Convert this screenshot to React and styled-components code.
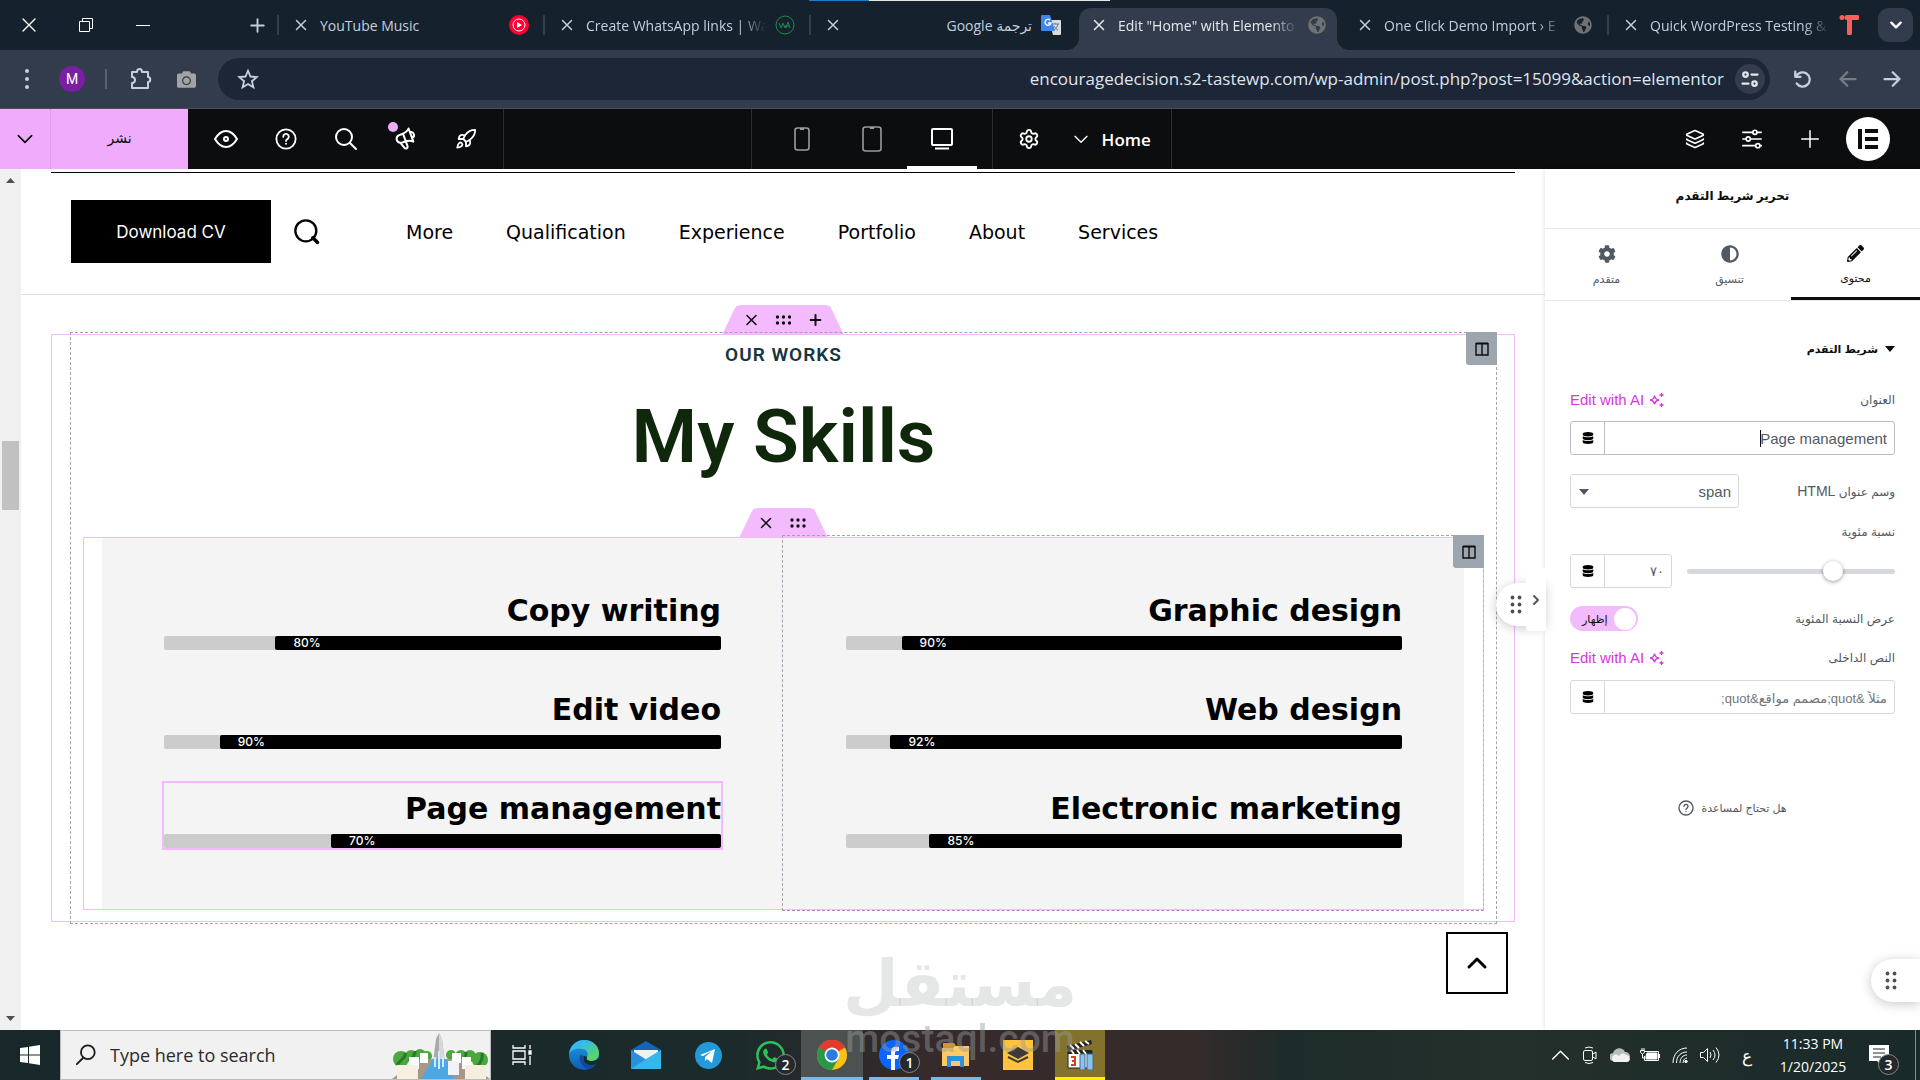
import React from "react";
import styled, { createGlobalStyle, css } from "styled-components";
import { Rocket, Settings, Layers } from "lucide-react";
import {
  FaAdjust,
  FaCamera,
  FaCog,
  FaDatabase,
  FaGlobeAmericas,
  FaPencilAlt,
  FaWhatsapp
} from "react-icons/fa";
import { HiOutlineSpeakerphone } from "react-icons/hi";

const ui = `"Open Sans", "Noto Sans", "DejaVu Sans", sans-serif`;
const panelFont = `"Liberation Sans", "DejaVu Sans", sans-serif`;
const siteFont = `"DejaVu Sans", sans-serif`;

const GlobalStyle = createGlobalStyle`
  *, *::before, *::after {
    box-sizing: border-box;
  }
  body {
    margin: 0;
    background: #fff;
    font-family: ${ui};
  }
  button {
    padding: 0;
    border: 0;
    background: none;
    color: inherit;
    font: inherit;
    cursor: pointer;
  }
  svg {
    display: block;
    flex: none;
  }
`;

const Page = styled.div`
  position: relative;
  display: flex;
  flex-direction: column;
  min-height: 100vh;
  overflow: hidden;
`;

const Stroke = ({ size = 24, width = 2, children, ...rest }) => (
  <svg
    width={size}
    height={size}
    viewBox="0 0 24 24"
    fill="none"
    stroke="currentColor"
    strokeWidth={width}
    strokeLinecap="round"
    strokeLinejoin="round"
    aria-hidden="true"
    {...rest}
  >
    {children}
  </svg>
);

/* ---------- browser tabs ---------- */

const TabStrip = styled.header`
  position: relative;
  display: flex;
  height: 50px;
  background: #16212e;
  color: #c3cfdf;
`;

const LoadLine = styled.div`
  position: absolute;
  top: 0;
  left: 809px;
  width: 301px;
  height: 1px;
  background: linear-gradient(to right, #1a7fcb 60px, #e6e6e6 60px);
`;

const WindowButtons = styled.div`
  display: flex;
  flex: 1;
  color: #fff;
`;

const WindowButton = styled.button`
  display: grid;
  place-items: center;
  width: 57px;
`;

const NewTab = styled.button`
  display: grid;
  place-items: center;
  width: 40px;
  margin-left: auto;
  color: #c3cfdf;
`;

const Tab = styled.div`
  position: relative;
  display: flex;
  align-items: center;
  flex: 0 1 266px;
  min-width: 0;
  padding: 0 13px 0 18px;
  font-size: 14px;
  line-height: 20px;

  &::before {
    content: "";
    position: absolute;
    left: 0;
    width: 2px;
    height: 20px;
    background: ${props => (props.$plain ? "transparent" : "#343f4e")};
  }

  ${props =>
    props.$active &&
    css`
      color: #e6e9ee;
      z-index: 1;

      &::before {
        left: 4px;
        top: 8px;
        width: 258px;
        height: 42px;
        border-radius: 12px 12px 0 0;
        background: #323c4c;
      }
      &::after {
        content: "";
        position: absolute;
        left: -8px;
        bottom: 0;
        width: 282px;
        height: 12px;
        background: radial-gradient(circle at 0 0, transparent 12px, #323c4c 12px) left / 12px 12px no-repeat,
          radial-gradient(circle at 12px 0, transparent 12px, #323c4c 12px) right / 12px 12px no-repeat;
      }
    `}
`;

const TabClose = styled.button`
  position: relative;
  z-index: 1;
  margin-right: 13px;
`;

const TabTitle = styled.span`
  position: relative;
  z-index: 1;
  flex: 1;
  min-width: 0;
  padding-top: 2px;
  overflow: hidden;
  white-space: nowrap;
  text-align: ${props => (props.$end ? "right" : "left")};
  ${props => props.$fade && "mask-image: linear-gradient(to right, #000 85%, transparent);"}
`;

const TabIcon = styled.span`
  position: relative;
  z-index: 1;
  display: grid;
  place-items: center;
  width: 22px;
  margin-left: 8px;
  color: #6f7174;
`;

const TabSearch = styled.button`
  display: grid;
  place-items: center;
  width: 35px;
  height: 34px;
  margin: 8px 7px 8px 5px;
  border-radius: 11px;
  background: #323c4c;
  color: #fff;
`;

const X = ({ size = 12, width = 3 }) => (
  <Stroke size={size} width={width}>
    <path d="M3 3 21 21M21 3 3 21" />
  </Stroke>
);

const YouTubeIcon = () => (
  <svg width="20" height="20" viewBox="0 0 20 20">
    <circle cx="10" cy="10" r="10" fill="#ff0033" />
    <circle cx="10" cy="10" r="6" fill="none" stroke="#fff" strokeWidth="1" />
    <path d="m8 7 5 3-5 3z" fill="#fff" />
  </svg>
);

const WaIcon = () => (
  <svg width="20" height="20" viewBox="0 0 20 20">
    <circle cx="10" cy="10" r="9" fill="none" stroke="#1e8a4c" strokeWidth="1" />
    <path d="m4 8 2 5 2-5 2 5 1-3m0 3 2-6 2 6M12 11h3" fill="none" stroke="#1e8a4c" />
  </svg>
);

const TranslateIcon = () => (
  <svg width="20" height="20" viewBox="0 0 20 20">
    <path d="M8 5h11a1 1 0 0 1 1 1v13a1 1 0 0 1-1 1h-7z" fill="#dcdcdc" />
    <path d="M11 9h7M14 8v1M17 9c-1 4-3 5-5 7m1-5c1 2 3 4 4 4" stroke="#68768a" fill="none" />
    <path d="M1 0h8l5 16H1a1 1 0 0 1-1-1V1a1 1 0 0 1 1-1z" fill="#3f86ee" />
    <path d="M9 5a3 3 0 1 0 1 3H7" stroke="#fff" strokeWidth="1.4" fill="none" />
  </svg>
);

const TasteIcon = () => (
  <svg width="20" height="20" viewBox="0 0 20 20">
    <circle cx="3" cy="2.500" r="2.500" fill="#ff5f5a" />
    <path d="M8 0h10a2 2 0 0 1 0 5h-5v13a2 2 0 0 1-5 0V5a2 2 0 0 1 0-5z" fill="#ff5f5a" />
  </svg>
);

/* ---------- address bar ---------- */

const AddressRow = styled.div`
  display: flex;
  align-items: center;
  height: 59px;
  padding-right: 7px;
  background: #323c4c;
  border-bottom: 1px solid #4a4d50;
  color: #c3cfe3;
`;

const BarButton = styled.button`
  display: grid;
  place-items: center;
  width: ${props => props.$w || 46}px;
  height: 40px;
  color: ${props => props.$color || "inherit"};
`;

const Avatar = styled.button`
  width: 26px;
  height: 26px;
  margin-left: 5px;
  border-radius: 50%;
  background: #7b1fa2;
  color: #fff;
  font: 14px/26px Roboto, sans-serif;
`;

const BarDivider = styled.span`
  width: 2px;
  height: 20px;
  margin: 0 12px 0 20px;
  background: #596272;
`;

const AddressBox = styled.div`
  display: flex;
  align-items: center;
  flex: 1;
  height: 42px;
  margin: 0 9px;
  padding: 0 5px 0 19px;
  border-radius: 21px;
  background: #1d2636;
`;

const AddressInput = styled.input`
  flex: 1;
  min-width: 0;
  padding: 0;
  border: 0;
  outline: 0;
  background: none;
  color: #dfe5ef;
  font: 17px/24px ${ui};
  text-align: right;
`;

const SiteInfo = styled.button`
  display: grid;
  place-items: center;
  width: 30px;
  height: 30px;
  margin-left: 11px;
  border-radius: 50%;
  background: #323c4c;
  color: #e3e6ea;
`;

/* ---------- editor bar ---------- */

const EditorBar = styled.div`
  display: flex;
  height: 60px;
  background: #0c0d0e;
  color: #fff;
`;

const PublishMore = styled.button`
  display: grid;
  place-items: center;
  width: 51px;
  background: #f0abfc;
  border-right: 1px dotted #cf8fdc;
  color: #0c0d0e;
`;

const Publish = styled.button`
  width: 137px;
  padding-bottom: 3px;
  background: #f0abfc;
  color: #0c0d0e;
  font-size: 14px;
`;

const BarGroup = styled.div`
  display: flex;
  align-items: center;
  flex: ${props => props.$flex || "none"};
  padding: ${props => props.$pad || "0"};
  border-right: 1px solid ${props => (props.$last ? "transparent" : "#2b2d2f")};
`;

const EditorButton = styled.button`
  position: relative;
  display: grid;
  place-items: center;
  width: ${props => props.$w || 60}px;
  height: 60px;
`;

const NewsDot = styled.span`
  position: absolute;
  top: 13px;
  left: 12px;
  width: 10px;
  height: 10px;
  border-radius: 50%;
  background: #f0abfc;
`;

const NewsIcon = styled(HiOutlineSpeakerphone)`
  transform: rotate(-20deg);
`;

const Device = styled.button`
  display: grid;
  place-items: center;
  width: 70px;
  height: 60px;
  color: ${props => (props.$active ? "#fff" : "#9a9c9e")};
  border-top: 3px solid transparent;
  border-bottom: 3px solid ${props => (props.$active ? "#fff" : "transparent")};
`;

const PageName = styled.button`
  display: flex;
  align-items: center;
  gap: 13px;
  margin-left: 14px;
  font-size: 17px;
  font-weight: 600;
`;

const ElementorLogo = styled.button`
  display: grid;
  place-items: center;
  width: 44px;
  height: 44px;
  margin-left: 6px;
  border-radius: 50%;
  background: #fff;
`;

/* ---------- preview ---------- */

const Workspace = styled.div`
  display: flex;
  flex: 1;
`;

const Scrollbar = styled.div`
  display: flex;
  flex-direction: column;
  align-items: center;
  justify-content: space-between;
  width: 21px;
  padding: 9px 0;
  background: #f0f0f0;
  color: #505050;
`;

const Thumb = styled.div`
  width: 17px;
  height: 69px;
  margin-bottom: 249px;
  background: #c1c1c1;
`;

const Arrow = ({ down, size = 9 }) => (
  <svg width={size} height={size - 4} viewBox="0 0 10 5" preserveAspectRatio="none">
    <path d={down ? "M0 0h10L5 5z" : "M0 5h10L5 0z"} fill="currentColor" />
  </svg>
);

const Canvas = styled.main`
  position: relative;
  flex: 1;
  min-width: 0;
`;

const TopRule = styled.div`
  height: 1px;
  margin: 3px 30px 0;
  background: #000;
`;

const SiteHeader = styled.div`
  display: flex;
  align-items: center;
  padding: 27px 50px 31px;
  border-bottom: 1px solid #e2e2e2;
`;

const DownloadButton = styled.button`
  width: 200px;
  height: 63px;
  background: #000;
  color: #fff;
  font: 17px Inter, sans-serif;
`;

const SiteSearch = styled.button`
  margin: 0 85px 0 22px;
`;

const SiteNav = styled.nav`
  display: flex;
  gap: 53px;
`;

const SiteLink = styled.a`
  color: #000;
  font: 19px/24px ${siteFont};
  text-decoration: none;
`;

const dashed = "1px dashed #9da5ae";

const Section = styled.section`
  position: relative;
  margin: 39px 30px 0;
  border: 1px solid #f3bafd;
`;

const SectionColumn = styled.div`
  position: relative;
  margin: -3px 17px -3px 18px;
  padding: 12px 12px 13px 12px;
  border: ${dashed};
`;

const Eyebrow = styled.p`
  margin: 0;
  color: #17343f;
  font: 600 19px/20px Roboto, sans-serif;
  letter-spacing: 1px;
  text-align: center;
`;

const Heading = styled.h2`
  margin: 21px 0 51px;
  color: #0f270b;
  font: 600 75px/100px Roboto, sans-serif;
  text-align: center;
`;

const Handle = styled.div`
  position: absolute;
  bottom: 100%;
  left: 50%;
  display: flex;
  align-items: center;
  justify-content: center;
  gap: 17px;
  width: ${props => props.$w}px;
  height: 29px;
  margin-bottom: 1px;
  background: #f3bafd;
  color: #0c0d0e;
  transform: translateX(-50%);
  clip-path: polygon(0 100%, 12px 4px, 14px 1px, 18px 0, calc(100% - 18px) 0, calc(100% - 14px) 1px, calc(100% - 12px) 4px, 100% 100%);
`;

const ColumnButton = styled.button`
  position: absolute;
  top: -1px;
  right: -1px;
  display: grid;
  place-items: center;
  width: 31px;
  height: 33px;
  border-radius: 0 0 0 3px;
  background: #9da5ae;
  color: #0c0d0e;
`;

const InnerSection = styled.div`
  position: relative;
  display: grid;
  grid-template-columns: 1fr 1fr;
  padding: 0 19px 0 18px;
  border: 1px solid #f3bafd;
  background: #f4f4f4 content-box;
`;

const SkillColumn = styled.div`
  display: flex;
  flex-direction: column;
  gap: 34px;
  padding: 47px 62px 61px;

  ${props =>
    props.$outlined &&
    css`
      position: relative;
      margin: -3px -20px -2px -1px;
      padding: 49px 81px 61px 63px;
      border: ${dashed};
      border-right-color: #d99be6;
      border-bottom-color: #a58bb0;
    `}
`;

const Skill = styled.div`
  outline: ${props => (props.$selected ? "2px solid #f3bafd" : "none")};
`;

const SkillName = styled.span`
  display: block;
  height: 51px;
  color: #000;
  font: bold 30px/52px ${siteFont};
  text-align: right;
`;

const Track = styled.div`
  display: flex;
  justify-content: flex-end;
  height: 14px;
  border-radius: 2px;
  background: #ccc;
`;

const Fill = styled.div`
  padding-left: 18px;
  border-radius: 2px;
  background: #000;
  color: #fff;
  font: 500 12px/14px Inter, sans-serif;
`;

const ToTop = styled.button`
  display: grid;
  place-items: center;
  width: 62px;
  height: 62px;
  margin: 10px 37px 0 auto;
  border: 2px solid #000;
`;

const Watermark = styled.div`
  position: absolute;
  left: 50%;
  bottom: 21px;
  width: 240px;
  color: rgba(150, 158, 158, 0.25);
  text-align: center;
  transform: translateX(-50%);
  pointer-events: none;
`;

const MarkArabic = styled.div`
  font: bold 64px/70px "DejaVu Sans", sans-serif;
  white-space: nowrap;
`;

const MarkLatin = styled.div`
  color: rgba(150, 155, 155, 0.45);
  font: 500 39px/40px Roboto, sans-serif;
`;

/* ---------- side panel ---------- */

const Panel = styled.aside`
  position: relative;
  width: 375px;
  background: #fff;
  box-shadow: 0 0 4px rgba(0, 0, 0, 0.15);
  color: #515962;
  font: 12px/20px ${panelFont};
`;

const PanelTitle = styled.h1`
  height: 60px;
  margin: 0;
  border-bottom: 1px solid #e6e8ea;
  color: #0c0d0e;
  font: bold 12px/54px ${panelFont};
  text-align: center;
`;

const PanelTabs = styled.div`
  display: grid;
  grid-template-columns: 123fr 123fr 129fr;
  height: 72px;
  border-bottom: 1px solid #e6e8ea;
`;

const PanelTab = styled.button`
  display: flex;
  flex-direction: column;
  align-items: center;
  gap: 6px;
  padding-top: 16px;
  border-bottom: 3px solid ${props => (props.$active ? "#0c0d0e" : "transparent")};
  color: ${props => (props.$active ? "#0c0d0e" : "#515962")};
  font-size: 11px;
`;

const Controls = styled.div`
  display: flex;
  flex-direction: column;
  padding: 36px 25px 0;
`;

const GroupTitle = styled.button`
  display: flex;
  align-items: center;
  gap: 7px;
  height: 24px;
  margin-bottom: 29px;
  color: #0c0d0e;
  font: bold 11px/24px ${panelFont};
`;

const LabelRow = styled.div`
  display: flex;
  align-items: center;
  justify-content: space-between;
  height: 20px;
  margin-bottom: ${props => props.$mb || 12}px;
`;

const ControlRow = styled.div`
  display: flex;
  align-items: center;
  justify-content: space-between;
  margin-top: ${props => props.$mt || 0}px;
  margin-bottom: ${props => props.$mb || 18}px;
`;

const TagName = styled.span`
  font-size: 14px;
`;

const AiButton = styled.button`
  display: flex;
  align-items: center;
  gap: 5px;
  color: #d936dd;
  font: 15px/20px ${panelFont};
`;

const TagButton = styled.button`
  display: grid;
  place-items: center;
  width: 35px;
  height: 34px;
  margin-right: -1px;
  border: 1px solid ${props => (props.$focus ? "#babfc5" : "#d5d8dc")};
  border-radius: 3px 0 0 3px;
  color: #000;
`;

const Field = styled.div`
  position: relative;
  display: flex;
`;

const TextInput = styled.input`
  flex: 1;
  width: ${props => props.$w || "auto"};
  min-width: 0;
  height: 34px;
  padding: 0 7px;
  border: 1px solid ${props => (props.$focus ? "#babfc5" : "#d5d8dc")};
  border-radius: 0 3px 3px 0;
  outline: 0;
  color: #515962;
  font: ${props => (props.$w ? 13 : 15)}px ${panelFont};

  &::placeholder {
    color: #70767d;
    font-size: 13px;
    opacity: 1;
  }
`;

const Caret = styled.span`
  position: absolute;
  top: 9px;
  right: 134px;
  width: 1px;
  height: 17px;
  background: #0c0d0e;
`;

const SelectWrap = styled.div`
  position: relative;
  width: 169px;
  color: #515962;

  svg {
    position: absolute;
    top: 15px;
    left: 9px;
  }
`;

const Select = styled.select`
  display: block;
  width: 100%;
  height: 34px;
  padding: 0 7px;
  border: 1px solid #d5d8dc;
  border-radius: 3px;
  appearance: none;
  background: none;
  color: inherit;
  direction: rtl;
  font: 15px ${panelFont};
`;

const SliderWrap = styled.div`
  position: relative;
  width: 208px;

  &::before {
    content: "";
    position: absolute;
    top: 8px;
    width: 100%;
    height: 5px;
    border-radius: 3px;
    background: #d5d8dc;
  }
`;

const Range = styled.input`
  position: relative;
  display: block;
  width: calc(100% + 20px);
  height: 20px;
  margin: 0 -10px;
  appearance: none;
  background: none;

  &::-webkit-slider-thumb {
    width: 20px;
    height: 20px;
    appearance: none;
    border-radius: 50%;
    background: #fff;
    box-shadow: 0 1px 4px rgba(0, 0, 0, 0.4);
  }
`;

const Switch = styled.label`
  position: relative;
  display: flex;
  align-items: center;
  width: 68px;
  height: 25px;
  padding: 0 2px 0 12px;
  border-radius: 13px;
  background: #f3bafd;
  color: #0c0d0e;
  font-size: 11px;

  input {
    position: absolute;
    inset: 0;
    width: 100%;
    height: 100%;
    margin: 0;
    opacity: 0;
  }
  i {
    width: 22px;
    height: 22px;
    margin-left: auto;
    border-radius: 50%;
    background: #fff;
  }
`;

const Help = styled.a`
  display: flex;
  align-items: center;
  justify-content: center;
  gap: 7px;
  margin-top: 84px;
  color: #515962;
  font-size: 11px;
  text-decoration: none;
`;

const Pill = styled.button`
  position: absolute;
  top: ${props => props.$top}px;
  ${props => (props.$right ? "right: 0;" : "left: -49px;")}
  width: 49px;
  height: 43px;
  padding-left: 13px;
  border-radius: 22px 0 0 22px;
  background: #fff;
  box-shadow: 0 2px 12px rgba(0, 0, 0, 0.22);
  color: #515151;
`;

const Collapse = styled.button`
  position: absolute;
  top: 399px;
  left: -19px;
  display: grid;
  place-items: center;
  width: 20px;
  height: 63px;
  border-radius: 3px 0 0 3px;
  background: #fff;
  color: #515962;
`;

/* ---------- taskbar ---------- */

const Taskbar = styled.footer`
  position: relative;
  display: flex;
  align-items: center;
  height: 50px;
  background: linear-gradient(to right, #182729 0, #1b2a2b 38%, #362a2b 48%, #362b2b 62%, #1d2b2a 67%, #24302b 78%, #192a2a 100%);
  color: #fff;
`;

const StartButton = styled.button`
  display: grid;
  place-items: center;
  width: 60px;
  height: 50px;
`;

const SearchBox = styled.label`
  display: flex;
  align-items: center;
  gap: 13px;
  width: 431px;
  height: 50px;
  padding-left: 14px;
  border: 1px solid #bcbcbc;
  background: #f1f1f1;
  color: #1b1b1b;
`;

const SearchInput = styled.input`
  flex: 1;
  min-width: 0;
  padding: 0;
  border: 0;
  outline: 0;
  background: none;
  font: 18px ${ui};

  &::placeholder {
    color: #2b2b2b;
    opacity: 1;
  }
`;

const Task = styled.button`
  position: relative;
  display: grid;
  place-items: center;
  width: 62px;
  height: 50px;

  &::before {
    content: "";
    position: absolute;
    inset: 0 ${props => (props.$line && !props.$wide ? 6 : 0)}px;
    background: ${props => props.$tint || "transparent"};
    border-bottom: 3px solid ${props => props.$line || "transparent"};
  }
  svg {
    position: relative;
  }
`;

const Badge = styled.span`
  position: absolute;
  top: ${props => props.$top || 24}px;
  left: ${props => props.$left || 36}px;
  width: 21px;
  height: 21px;
  border: 1px solid #85888a;
  border-radius: 50%;
  background: #26292b;
  color: #fff;
  font: 600 14px/19px ${ui};
  text-align: center;
`;

const Tray = styled.div`
  display: flex;
  align-items: center;
  height: 50px;
  margin-left: auto;
  border-right: 1px solid #8a9090;
  margin-right: 4px;
`;

const TrayButton = styled.button`
  position: relative;
  display: grid;
  place-items: center;
  width: ${props => props.$w || 30}px;
  height: 50px;
  font-size: 17px;
`;

const Notifications = styled(TrayButton)`
  width: 58px;
  padding-right: 14px;
`;

const Clock = styled.time`
  width: 88px;
  font: 14px/23px ${ui};
  text-align: center;
`;

const Dots = ({ cols, rows, size }) => (
  <svg width={cols * size} height={rows * size} viewBox={`0 0 ${cols * 4} ${rows * 4}`} fill="currentColor">
    {Array.from({ length: cols * rows }, (_, i) => (
      <circle key={i} cx={(i % cols) * 4 + 2} cy={Math.floor(i / cols) * 4 + 2} r="1.100" />
    ))}
  </svg>
);

const ColumnIcon = () => (
  <svg width="14" height="14" viewBox="0 0 14 14" fill="none" stroke="currentColor">
    <path d="M1 1.500h12" strokeWidth="2" />
    <path d="M1 1v12h12V1M7 1v12" strokeWidth="1.400" />
  </svg>
);

const Sparkles = () => (
  <svg width="16" height="14" viewBox="0 0 16 14" fill="none" stroke="currentColor" strokeWidth="1.300">
    <path d="M5.500 2.500Q6 6.500 10 7 6 7.500 5.500 11.500 5 7.500 1 7 5 6.500 5.500 2.500zM12.500 0v4M10.500 2h4M12.500 10v4M10.500 12h4" />
  </svg>
);

const Question = ({ size, width }) => (
  <Stroke size={size} width={width}>
    <circle cx="12" cy="12" r="10.500" />
    <path d="M9 9.500a3 3 0 1 1 4.500 2.600c-1 .6-1.500 1-1.500 2M12 17v.3" />
  </Stroke>
);

const Fountain = () => (
  <svg width="98" height="48" viewBox="0 0 98 48">
    <g fill="#4aa83c">
      <circle cx="9" cy="28" r="8" />
      <circle cx="19" cy="25" r="6" />
      <circle cx="28" cy="24" r="6" />
      <circle cx="35" cy="25" r="5" />
      <circle cx="59" cy="24" r="5" />
      <circle cx="69" cy="25" r="6" />
      <circle cx="78" cy="25" r="6" />
      <circle cx="88" cy="29" r="8" />
    </g>
    <path d="M5 34c3-5 7-5 9-12M17 30c4-3 6-6 6-10M84 36c4-3 7-8 6-14M70 31c3-3 4-6 4-10" stroke="#257a2c" strokeWidth="3" fill="none" />
    <path d="m0 48 26-20h44l28 20z" fill="#a69786" />
    <path d="M44 8l3-6 3 6 3 24H41z" fill="#a9a9a9" />
    <path d="M47 2l3 6 3 24h-6z" fill="#d6d6d6" />
    <path d="m41 28-12 20h34L54 28z" fill="#4ba8e6" />
    <path d="M47 20v18M43 26v10M51 26v10" stroke="#cfeaf8" strokeWidth="2" />
    <g fill="#fff">
      <path d="M17 26h10v12H17zM28 22h8v10h-8zM60 22h9v10h-9zM70 26h9v12h-9z" />
      <path d="M56 30h11v14H56z" fill="#f2f2f7" />
      <path d="M5 34h21v14H5z" fill="#f7efe0" />
      <path d="M73 34h21v14H73z" fill="#f5edde" />
    </g>
  </svg>
);

const EdgeIcon = () => (
  <svg width="30" height="30" viewBox="0 0 30 30">
    <defs>
      <linearGradient id="edgeTop" x1="0" y1="0" x2="1" y2="1">
        <stop offset="0.300" stopColor="#35b9ee" />
        <stop offset="0.800" stopColor="#56d66a" />
      </linearGradient>
      <linearGradient id="edgeSide" x1="0" y1="0" x2="0" y2="1">
        <stop offset="0" stopColor="#1b9de2" />
        <stop offset="1" stopColor="#1459b3" />
      </linearGradient>
    </defs>
    <circle cx="15" cy="15" r="15" fill="url(#edgeSide)" />
    <path d="M0 14C1 5 8 0 15 0c9 0 15 6 15 13 0 5-3 8-7 8-5 0-6-2-5-4 2-3 0-8-5-8C7 8 2 10 0 14z" fill="url(#edgeTop)" />
    <path d="M18 17c-1 2 0 4 5 4 3 0 5-1 6-3l1 3c-1 2-2 3-4 4-7 3-14-2-11-9 1 0 2 0 3 1z" fill="#1b2a2b" />
    <path d="M11 15c-2 7 3 13 9 14 3-1 5-3 7-5-7 3-14-1-12-8z" fill="#0f4a9d" />
  </svg>
);

const MailIcon = () => (
  <svg width="32" height="28" viewBox="0 0 32 28">
    <path d="M1 9 16 0l15 9v19H1z" fill="#1464b8" />
    <path d="M4 9h24v12H4z" fill="#f0f0f0" />
    <path d="M1 9v19h30z" fill="#2b8fe0" />
    <path d="M31 9v19H1l15-10z" fill="#34b8ea" />
  </svg>
);

const TelegramIcon = () => (
  <svg width="27" height="27" viewBox="0 0 27 27">
    <circle cx="13.500" cy="13.500" r="13.500" fill="#2299d8" />
    <path d="m5 13 15-6-3 14-5-4-2 2v-4l7-6-9 5z" fill="#fff" />
  </svg>
);

const ChromeIcon = () => (
  <svg width="30" height="30" viewBox="0 0 30 30">
    <circle cx="15" cy="15" r="15" fill="#fbc116" />
    <path d="M15 15 2 7.500a15 15 0 0 1 26 0z" fill="#e33b2e" />
    <path d="M15 7.500h13A15 15 0 0 0 2 7.500L8.500 18.700z" fill="#e33b2e" />
    <path d="M2 7.500A15 15 0 0 0 15 30l6.500-11.200L15 15z" fill="#279847" />
    <circle cx="15" cy="15" r="7.500" fill="#fff" />
    <circle cx="15" cy="15" r="5.800" fill="#2c7be5" />
  </svg>
);

const FacebookIcon = () => (
  <svg width="30" height="30" viewBox="0 0 30 30">
    <circle cx="15" cy="15" r="15" fill="#0b66ff" />
    <path d="M12 30V19H8v-4h4v-3c0-5 3-6 8-5v4c-3 0-4 0-4 2v2h4l-1 4h-3v11z" fill="#fff" />
  </svg>
);

const ExplorerIcon = () => (
  <svg width="28" height="25" viewBox="0 0 28 25">
    <path d="M1 0h11l2 3h13v8H1z" fill="#d9931e" />
    <path d="M0 5h11l2-2h14v20H0z" fill="#fbca65" />
    <path d="M5 13h17v11h-4v-6H9v6H5z" fill="#2f90dc" />
  </svg>
);

const StackIcon = () => (
  <svg width="30" height="30" viewBox="0 0 30 30">
    <path d="M0 0h30v30H0z" fill="#ffc33c" />
    <path d="m15 7 11 6-11 6-11-6z" fill="#3a3a3e" />
    <path d="m5 17 10 5 10-5" stroke="#3a3a3e" strokeWidth="2" fill="none" />
  </svg>
);

const ClapperIcon = () => (
  <svg width="28" height="30" viewBox="0 0 28 30">
    <path d="m1 6 24-6 1 4L2 11z" fill="#222" />
    <path d="m4 5 4 4m1-5 4 4m1-6 4 4m1-5 4 3" stroke="#fff" strokeWidth="2" />
    <path d="M2 11h24v17H2z" fill="#fff" stroke="#222" />
    <path d="M2 10h24v4H2z" fill="#222" />
    <path d="M5 10l3 4m3-4 3 4m3-4 3 4" stroke="#fff" strokeWidth="2" />
    <path d="M5 17h4v4H6m3 0v4H5" stroke="#d6421f" strokeWidth="2" fill="none" />
    <path d="M22 16v5" stroke="#2a9b3c" strokeWidth="2" />
    <path d="M14 14h5v16h-5zM21 14h6v16h-6z" fill="#8fc0e8" stroke="#3d6d94" />
  </svg>
);

const tabs = [
  { title: "YouTube Music", icon: <YouTubeIcon /> },
  { title: "Create WhatsApp links | Wa", icon: <WaIcon />, fade: true },
  { title: "Google ترجمة", icon: <TranslateIcon />, end: true },
  { title: 'Edit "Home" with Elemento', icon: <FaGlobeAmericas size={18} />, fade: true, active: true },
  { title: "One Click Demo Import › E", icon: <FaGlobeAmericas size={18} />, fade: true, plain: true },
  { title: "Quick WordPress Testing &", icon: <TasteIcon />, fade: true }
];

const navLinks = ["More", "Qualification", "Experience", "Portfolio", "About", "Services"];

const leftSkills = [
  { name: "Copy writing", value: 80 },
  { name: "Edit video", value: 90 },
  { name: "Page management", value: 70, selected: true }
];

const rightSkills = [
  { name: "Graphic design", value: 90 },
  { name: "Web design", value: 92 },
  { name: "Electronic marketing", value: 85 }
];

const BrowserTabs = () => (
  <TabStrip>
    <LoadLine />
    <WindowButtons>
      <WindowButton aria-label="Close window">
        <X size={16} width={2} />
      </WindowButton>
      <WindowButton aria-label="Restore">
        <svg width="14" height="14" viewBox="0 0 14 14" fill="none" stroke="currentColor">
          <path d="M.500 3.500h10v10H.500zM3.500 3V.500h10v10H11" />
        </svg>
      </WindowButton>
      <WindowButton aria-label="Minimize">
        <svg width="14" height="1" viewBox="0 0 14 1">
          <path d="M0 0h14v1H0z" fill="currentColor" />
        </svg>
      </WindowButton>
      <NewTab aria-label="New tab">
        <Stroke size={15} width={3}>
          <path d="M12 2v20M2 12h20" />
        </Stroke>
      </NewTab>
    </WindowButtons>
    {tabs.map(tab => (
      <Tab key={tab.title} $active={tab.active} $plain={tab.plain}>
        <TabClose aria-label="Close tab">
          <X />
        </TabClose>
        <TabTitle $fade={tab.fade} $end={tab.end}>
          {tab.title}
        </TabTitle>
        <TabIcon>{tab.icon}</TabIcon>
      </Tab>
    ))}
    <TabSearch aria-label="Search tabs">
      <Stroke size={14} width={4}>
        <path d="m4 8 8 8 8-8" />
      </Stroke>
    </TabSearch>
  </TabStrip>
);

const AddressBar = () => (
  <AddressRow>
    <BarButton $w={54} aria-label="Menu">
      <svg width="4" height="20" viewBox="0 0 4 20" fill="currentColor">
        <circle cx="2" cy="2" r="2" />
        <circle cx="2" cy="10" r="2" />
        <circle cx="2" cy="18" r="2" />
      </svg>
    </BarButton>
    <Avatar>M</Avatar>
    <BarDivider />
    <BarButton $w={44} aria-label="Extensions">
      <svg width="22" height="22" viewBox="0 0 22 22" fill="none" stroke="currentColor" strokeWidth="2">
        <path d="M2 4h5c0-4 5-4 5 0h6v5c3 0 3 5 0 5v6H2v-5c4 0 4-6 0-6z" strokeLinejoin="round" />
      </svg>
    </BarButton>
    <BarButton $color="#a3a3a3" aria-label="Screenshot">
      <FaCamera size={19} />
    </BarButton>
    <AddressBox>
      <Stroke size={22} width={2} strokeLinejoin="miter">
        <path d="m12 3 2.700 6.300 6.800.600-5.200 4.500 1.600 6.700L12 17.500l-5.900 3.600 1.600-6.700L2.500 9.900l6.800-.600z" />
      </Stroke>
      <AddressInput
        aria-label="Address"
        defaultValue="encouragedecision.s2-tastewp.com/wp-admin/post.php?post=15099&action=elementor"
      />
      <SiteInfo aria-label="Site information">
        <Stroke size={18} width={3}>
          <circle cx="6" cy="6" r="3" />
          <path d="M14 6h8M2 18h8" />
          <circle cx="18" cy="18" r="3" />
        </Stroke>
      </SiteInfo>
    </AddressBox>
    <BarButton aria-label="Reload">
      <Stroke size={18} width={3}>
        <path d="M3 2v7h7M4 9a9.500 9.500 0 1 1 1 9" />
      </Stroke>
    </BarButton>
    <BarButton $color="#767c86" aria-label="Back">
      <Stroke size={18} width={3}>
        <path d="M22 12H3M11 3l-9 9 9 9" />
      </Stroke>
    </BarButton>
    <BarButton $w={42} aria-label="Forward">
      <Stroke size={18} width={3}>
        <path d="M2 12h19M13 3l9 9-9 9" />
      </Stroke>
    </BarButton>
  </AddressRow>
);

const EditorTop = () => (
  <EditorBar>
    <PublishMore aria-label="Save options">
      <Stroke size={20} width={2}>
        <path d="m4 8 8 8 8-8" />
      </Stroke>
    </PublishMore>
    <Publish>نشر</Publish>
    <BarGroup $pad="0 7px 0 8px">
      <EditorButton aria-label="Preview">
        <Stroke size={24} width={2}>
          <path d="M1 12c3-5 6-8 11-8s8 3 11 8c-3 5-6 8-11 8s-8-3-11-8z" />
          <circle cx="12" cy="12" r="2" />
        </Stroke>
      </EditorButton>
      <EditorButton aria-label="Help">
        <Question size={22} width={2} />
      </EditorButton>
      <EditorButton aria-label="Finder">
        <Stroke size={24} width={2}>
          <circle cx="10" cy="10" r="8" />
          <path d="m16 16 6 6" />
        </Stroke>
      </EditorButton>
      <EditorButton aria-label="What's new">
        <NewsIcon size={24} />
        <NewsDot />
      </EditorButton>
      <EditorButton aria-label="Checklist">
        <Rocket size={22} strokeWidth={2} />
      </EditorButton>
    </BarGroup>
    <BarGroup $flex="1" />
    <BarGroup $pad="0 15px">
      <Device aria-label="Mobile">
        <svg width="16" height="24" viewBox="0 0 16 24" fill="none" stroke="currentColor" strokeWidth="1.600">
          <rect x="1" y="1" width="14" height="22" rx="2.500" />
          <path d="M6 2h4" strokeWidth="2" />
        </svg>
      </Device>
      <Device aria-label="Tablet">
        <svg width="20" height="26" viewBox="0 0 20 26" fill="none" stroke="currentColor" strokeWidth="1.600">
          <rect x="1" y="1" width="18" height="24" rx="2.500" />
          <path d="M8 2h4" strokeWidth="2" />
        </svg>
      </Device>
      <Device $active aria-label="Desktop">
        <svg width="22" height="22" viewBox="0 0 22 22" fill="none" stroke="currentColor" strokeWidth="2">
          <rect x="1" y="1" width="20" height="16" rx="1" />
          <path d="M4 20.500h14" />
        </svg>
      </Device>
    </BarGroup>
    <BarGroup $pad="0 20px 0 6px">
      <EditorButton aria-label="Page settings">
        <Settings size={22} strokeWidth={2} />
      </EditorButton>
      <PageName>
        <Stroke size={16} width={2}>
          <path d="m3 8 9 9 9-9" />
        </Stroke>
        Home
      </PageName>
    </BarGroup>
    <BarGroup $flex="2" $last />
    <BarGroup $pad="0 29px 0 0" $last>
      <EditorButton $w={57} aria-label="Structure">
        <Layers size={20} strokeWidth={2} />
      </EditorButton>
      <EditorButton $w={57} aria-label="Site settings">
        <Stroke size={20} width={2}>
          <path d="M1 4h12M18 4h5M1 12h4M10 12h13M1 20h15M22 20h1" />
          <circle cx="15.500" cy="4" r="2.500" />
          <circle cx="7.500" cy="12" r="2.500" />
          <circle cx="19" cy="20" r="2.500" />
        </Stroke>
      </EditorButton>
      <EditorButton aria-label="Add element">
        <Stroke size={18} width={2}>
          <path d="M12 1v22M1 12h22" />
        </Stroke>
      </EditorButton>
      <ElementorLogo aria-label="Elementor">
        <svg width="20" height="20" viewBox="0 0 20 20" fill="#0c0d0e">
          <path d="M0 0h4v20H0zM7 0h13v4H7zM7 8h13v4H7zM7 16h13v4H7z" />
        </svg>
      </ElementorLogo>
    </BarGroup>
  </EditorBar>
);

const SkillBars = ({ items }) =>
  items.map(item => (
    <Skill key={item.name} $selected={item.selected}>
      <SkillName>{item.name}</SkillName>
      <Track role="progressbar" aria-label={item.name} aria-valuenow={item.value}>
        <Fill style={{ width: `${item.value}%` }}>{item.value}%</Fill>
      </Track>
    </Skill>
  ));

const Preview = () => (
  <Canvas>
    <TopRule />
    <SiteHeader>
      <DownloadButton>Download CV</DownloadButton>
      <SiteSearch aria-label="Search">
        <Stroke size={28} width={2}>
          <circle cx="11" cy="11" r="9" />
          <path d="m17 17 4 4" strokeWidth="3" />
        </Stroke>
      </SiteSearch>
      <SiteNav>
        {navLinks.map(link => (
          <SiteLink key={link} href="#">
            {link}
          </SiteLink>
        ))}
      </SiteNav>
    </SiteHeader>
    <Section>
      <Handle $w={121}>
        <X size={12} />
        <Dots cols={3} rows={2} size={6} />
        <Stroke size={12} width={4}>
          <path d="M12 2v20M2 12h20" />
        </Stroke>
      </Handle>
      <SectionColumn>
        <ColumnButton aria-label="Edit column">
          <ColumnIcon />
        </ColumnButton>
        <Eyebrow>OUR WORKS</Eyebrow>
        <Heading>My Skills</Heading>
        <InnerSection>
          <Handle $w={88}>
            <X size={12} />
            <Dots cols={3} rows={2} size={6} />
          </Handle>
          <SkillColumn>
            <SkillBars items={leftSkills} />
          </SkillColumn>
          <SkillColumn $outlined>
            <ColumnButton aria-label="Edit column">
              <ColumnIcon />
            </ColumnButton>
            <SkillBars items={rightSkills} />
          </SkillColumn>
        </InnerSection>
      </SectionColumn>
    </Section>
    <ToTop aria-label="Back to top">
      <Stroke size={24} width={3}>
        <path d="m4 16 8-8 8 8" />
      </Stroke>
    </ToTop>
  </Canvas>
);

const EditPanel = () => (
  <Panel>
    <Pill $top={414} aria-label="Move panel">
      <Dots cols={2} rows={3} size={7} />
    </Pill>
    <Collapse aria-label="Collapse panel">
      <Stroke size={12} width={4}>
        <path d="m8 4 8 8-8 8" />
      </Stroke>
    </Collapse>
    <PanelTitle dir="rtl">تحرير شريط التقدم</PanelTitle>
    <PanelTabs>
      <PanelTab>
        <FaCog size={18} />
        متقدم
      </PanelTab>
      <PanelTab>
        <FaAdjust size={18} />
        تنسيق
      </PanelTab>
      <PanelTab $active>
        <FaPencilAlt size={17} />
        محتوى
      </PanelTab>
    </PanelTabs>
    <Controls>
      <GroupTitle dir="rtl">
        <Arrow down size={10} />
        شريط التقدم
      </GroupTitle>
      <LabelRow $mb={11}>
        <AiButton>
          Edit with AI <Sparkles />
        </AiButton>
        <label htmlFor="title">العنوان</label>
      </LabelRow>
      <Field>
        <TagButton $focus aria-label="Dynamic tags">
          <FaDatabase size={12} />
        </TagButton>
        <TextInput $focus id="title" dir="rtl" defaultValue="Page management" />
        <Caret />
      </Field>
      <ControlRow $mt={19} $mb={14}>
        <SelectWrap>
          <Select id="tag">
            <option>span</option>
          </Select>
          <Arrow down size={10} />
        </SelectWrap>
        <label htmlFor="tag" dir="rtl">
          وسم عنوان <TagName>HTML</TagName>
        </label>
      </ControlRow>
      <LabelRow>
        <span />
        <label htmlFor="percent">نسبة مئوية</label>
      </LabelRow>
      <ControlRow>
        <Field>
          <TagButton aria-label="Dynamic tags">
            <FaDatabase size={12} />
          </TagButton>
          <TextInput id="percent" $w="68px" dir="rtl" defaultValue="٧٠" />
        </Field>
        <SliderWrap>
          <Range type="range" aria-label="نسبة مئوية" defaultValue="70" />
        </SliderWrap>
      </ControlRow>
      <ControlRow $mb={17}>
        <Switch>
          <input id="show" type="checkbox" defaultChecked />
          إظهار
          <i />
        </Switch>
        <label htmlFor="show">عرض النسبة المئوية</label>
      </ControlRow>
      <LabelRow>
        <AiButton>
          Edit with AI <Sparkles />
        </AiButton>
        <label htmlFor="inner">النص الداخلى</label>
      </LabelRow>
      <Field>
        <TagButton aria-label="Dynamic tags">
          <FaDatabase size={12} />
        </TagButton>
        <TextInput id="inner" dir="rtl" placeholder={"مثلاً &quot;مصمم مواقع&quot;"} />
      </Field>
      <Help href="#">
        <Question size={16} width={2} />
        هل تحتاج لمساعدة
      </Help>
    </Controls>
    <Pill $right $top={790} aria-label="Open assistant">
      <Dots cols={2} rows={3} size={7} />
    </Pill>
  </Panel>
);

const WindowsBar = () => (
  <Taskbar>
    <StartButton aria-label="Start">
      <svg width="20" height="20" viewBox="0 0 20 20" fill="#fff">
        <path d="m0 3 8-1v7.500H0zM9 1.800 20 0v9.500H9zM0 10.500h8V18l-8-1zM9 10.500h11V20L9 18.200z" />
      </svg>
    </StartButton>
    <SearchBox>
      <Stroke size={22} width={2}>
        <circle cx="14" cy="9" r="7.500" />
        <path d="m9 15-7 7" />
      </Stroke>
      <SearchInput aria-label="Search" placeholder="Type here to search" />
      <Fountain />
    </SearchBox>
    <Task aria-label="Task view">
      <svg width="20" height="20" viewBox="0 0 20 20" fill="none" stroke="#fff" strokeWidth="1.300">
        <path d="M1 0v3h12V0M1 20v-3h12v3M1 6h12v8H1zM18 0v4M18 11v9" />
        <path d="M17 6h2v3h-2z" fill="#fff" />
      </svg>
    </Task>
    <Task aria-label="Edge"><EdgeIcon /></Task>
    <Task aria-label="Mail"><MailIcon /></Task>
    <Task aria-label="Telegram"><TelegramIcon /></Task>
    <Task aria-label="WhatsApp">
      <FaWhatsapp size={33} color="#2cc25a" />
      <Badge>2</Badge>
    </Task>
    <Task aria-label="Chrome" $wide $tint="#4c5251" $line="#76b9ed"><ChromeIcon /></Task>
    <Task aria-label="Facebook" $line="#76b9ed">
      <FacebookIcon />
      <Badge $top={22}>1</Badge>
    </Task>
    <Task aria-label="File Explorer" $line="#76b9ed"><ExplorerIcon /></Task>
    <Task aria-label="Stack"><StackIcon /></Task>
    <Task aria-label="Recorder" $tint="#82722d" $line="#ffee00"><ClapperIcon /></Task>
    <Tray>
      <TrayButton aria-label="Hidden icons">
        <Stroke size={17} width={2}>
          <path d="m1 17 11-11 11 11" />
        </Stroke>
      </TrayButton>
      <TrayButton aria-label="Meet now">
        <svg width="16" height="18" viewBox="0 0 16 18" fill="none" stroke="#fff">
          <rect x="1.500" y="4.500" width="9" height="10" rx="1.500" />
          <path d="m11 8 3-2v7l-3-2M3 2q4-2 8 0M3 16.500q4 2 8 0" />
        </svg>
      </TrayButton>
      <TrayButton aria-label="OneDrive">
        <svg width="20" height="14" viewBox="0 0 20 14">
          <path d="M4 13a4 4 0 0 1-1-8C5-1 13-1 15 4c3 0 5 2 5 5z" fill="#b8bcbc" />
          <path d="M4 14a4 4 0 0 1 0-7c2-1 4 0 5 1 3-3 5-3 7-1 5 0 5 7 1 7z" fill="#f2f2f2" />
        </svg>
      </TrayButton>
      <TrayButton aria-label="Battery">
        <svg width="20" height="14" viewBox="0 0 20 14" fill="none" stroke="#fff">
          <path d="M5 3.500h13.500v9h-14V8M2 0v2M4 0v2M.500 2.500h4v2q-2 3-4 0zM2.500 6v4h2" />
          <path d="M7 5h10v6H6V8z" fill="#fff" />
          <path d="M19.500 6v4" />
        </svg>
      </TrayButton>
      <TrayButton aria-label="Wi-Fi">
        <svg width="16" height="16" viewBox="0 0 16 16" fill="none" stroke="#fff">
          <path d="M1 16C1 7 7 1 15 1M4.500 16C4.500 9 9 5 15 5M8 16c0-5 3-8 7-8M11 16c0-3 2-5 4-5" />
          <circle cx="14" cy="14.500" r="1.200" fill="#fff" />
        </svg>
      </TrayButton>
      <TrayButton aria-label="Volume">
        <svg width="20" height="18" viewBox="0 0 20 18" fill="none" stroke="#fff">
          <path d="M.500 6.500h3l4-4v13l-4-4h-3zM10 6q2 3 0 6M13 4q4 5 0 10M16 1.500q6 7.500 0 15" />
        </svg>
      </TrayButton>
      <TrayButton $w={44}>ع</TrayButton>
      <Clock>
        11:33 PM
        <br />
        1/20/2025
      </Clock>
      <Notifications aria-label="Notifications">
        <svg width="20" height="20" viewBox="0 0 20 20">
          <path d="M0 0h20v16h-8v4l-4-4H0z" fill="#fff" />
          <path d="M4 4h12M4 8h12M4 12h8" stroke="#1b2a2b" />
        </svg>
        <Badge $left={21}>3</Badge>
      </Notifications>
    </Tray>
    <Watermark aria-hidden="true">
      <MarkArabic>مستقل</MarkArabic>
      <MarkLatin>mostaql.com</MarkLatin>
    </Watermark>
  </Taskbar>
);

const App = () => (
  <Page>
    <GlobalStyle />
    <BrowserTabs />
    <AddressBar />
    <EditorTop />
    <Workspace>
      <Scrollbar>
        <Arrow />
        <Thumb />
        <Arrow down />
      </Scrollbar>
      <Preview />
      <EditPanel />
    </Workspace>
    <WindowsBar />
  </Page>
);

export default App;
